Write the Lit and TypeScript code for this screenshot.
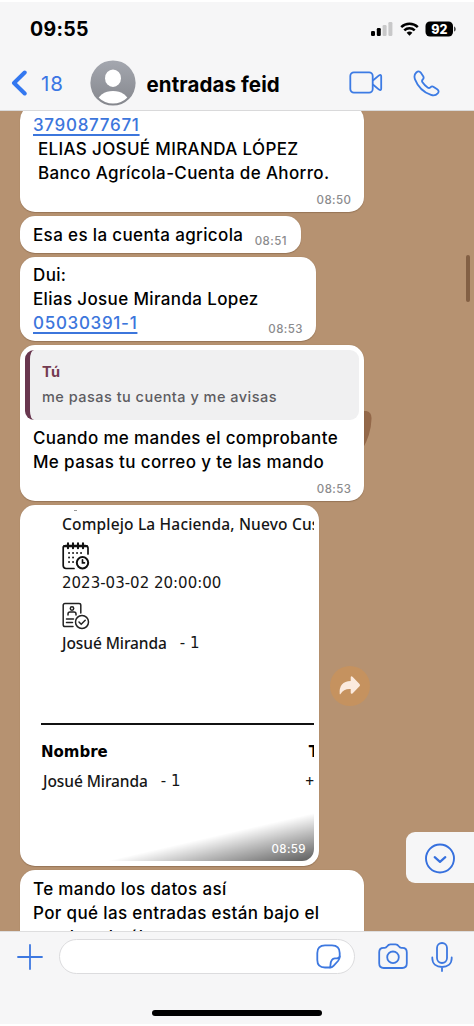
import { LitElement, html, css } from "lit";
import { customElement } from "lit/decorators.js";

@customElement("status-bar")
class StatusBar extends LitElement {
  static styles = css`
    :host { display: flex; height: 56px; align-items: center; padding: 2px 17px 0 30px; box-sizing: border-box; }
    .clock { flex: 1; font-size: 19.5px; font-weight: 700; letter-spacing: 0.3px; }
    .signal { margin-right: 7px; }
    .wifi { margin-right: 6px; }
    .level { font: 800 12.5px Inter, sans-serif; }
  `;
  render() {
    return html`
      <span class="clock">09:55</span>
      <svg class="signal" width="22" height="16" viewBox="0 0 22 16">
        <rect x="0" y="10" width="4" height="5" rx="1.2" />
        <rect x="5.8" y="7" width="4" height="8" rx="1.2" />
        <rect x="11.6" y="4" width="4" height="11" rx="1.2" fill="#c8c8c9" />
        <rect x="17.4" y="1" width="4" height="14" rx="1.2" fill="#c8c8c9" />
      </svg>
      <svg class="wifi" width="19" height="16" viewBox="0 0 19 16" fill="none" stroke="#000" stroke-width="2.5">
        <path d="M1.2 6.1a12 12 0 0 1 16.6 0" />
        <path d="M4.3 9.4a7.4 7.4 0 0 1 10.4 0" />
        <path d="M9.5 14.8 6.6 11.8a4.2 4.2 0 0 1 5.8 0z" fill="#000" stroke="none" />
      </svg>
      <svg width="32" height="16" viewBox="0 0 32 16">
        <rect x="0.5" y="0.5" width="27.5" height="15" rx="4.5" />
        <path d="M29.3 5.4c1.6.5 1.6 4.7 0 5.2z" />
        <text class="level" x="14.3" y="12.5" text-anchor="middle" fill="#fff">92</text>
      </svg>
    `;
  }
}

@customElement("chat-header")
class ChatHeader extends LitElement {
  static styles = css`
    :host { display: flex; height: 55px; align-items: center; padding: 0 34.5px 0 11px; box-sizing: border-box; border-bottom: 1px solid #d9d9da; }
    .count { width: 49px; margin-left: 13px; padding-top: 1px; font-size: 20.5px; color: #3b76e4; letter-spacing: 0.9px; }
    .avatar { margin-right: 10.5px; }
    .name { flex: 1; padding-top: 2px; font-size: 20.5px; font-weight: 700; letter-spacing: 0.1px; white-space: nowrap; }
    .video { margin-right: 30px; }
    svg { flex: none; }
  `;
  render() {
    return html`
      <svg width="17" height="26" viewBox="0 0 17 26" fill="none" stroke="#3478f0" stroke-width="4" stroke-linecap="round" stroke-linejoin="round">
        <path d="M13.7 2.5 3 13l10.7 10.5" />
      </svg>
      <span class="count">18</span>
      <svg class="avatar" width="46" height="46" viewBox="0 0 46 46">
        <defs>
          <linearGradient id="g" x2="0" y2="1"><stop stop-color="#a4a7af" /><stop offset="1" stop-color="#85878d" /></linearGradient>
          <clipPath id="c"><circle cx="23" cy="23" r="20.5" /></clipPath>
        </defs>
        <circle cx="23" cy="23" r="22.6" fill="url(#g)" />
        <ellipse cx="23" cy="18.2" rx="8" ry="8.7" fill="#fff" />
        <ellipse cx="23" cy="42" rx="15.5" ry="11" fill="#fff" clip-path="url(#c)" />
      </svg>
      <span class="name">entradas feid</span>
      <svg class="video" width="34" height="24" viewBox="0 0 34 24" fill="none" stroke="#3c7be4" stroke-width="1.8" stroke-linejoin="round">
        <rect x="1.3" y="1.3" width="22.4" height="20.4" rx="3.6" />
        <path d="M23.9 9.5 30 4.4q2.2-1.4 2.2 1v12.2q0 2.4-2.2 1L23.9 13.5" />
      </svg>
      <svg width="27" height="27" viewBox="0 0 27 27" fill="none" stroke="#3c7be4" stroke-width="1.8" stroke-linejoin="round">
        <path d="M3.3 2.5C5 .9 6.5 1 7.7 2.6l2.5 3.6c.8 1.3.6 2.2-.4 3.3-1 1-1.200 1.400-.5 2.600 1.400 2.200 3.400 4.200 5.600 5.600 1.100.7 1.600.5 2.500-.4 1.100-1.100 2-1.300 3.300-.4l3.500 2.400c1.700 1.200 1.800 2.500.5 4.100-1.700 2-3.900 2.500-6.700 1.500C10.800 22.300 4.700 16.200 2 9.300 1 6.600 1.400 4.300 3.300 2.500Z" />
      </svg>
    `;
  }
}

@customElement("ticket-photo")
class TicketPhoto extends LitElement {
  static styles = css`
    :host { display: block; width: 289px; height: 351px; overflow: hidden; position: relative; border-radius: 12px; color: #161616; font-family: "Noto Sans", sans-serif; font-size: 15.5px; letter-spacing: -0.08px; white-space: nowrap; }
    .info { display: flex; flex-direction: column; padding: 4px 0 0 37px; height: 210px; box-sizing: border-box; }
    .line { line-height: 20px; }
    .place { letter-spacing: 0.17px; }
    .date { font-family: "DejaVu Sans", sans-serif; font-size: 15px; letter-spacing: 0; }
    .num { font-family: "DejaVu Sans", sans-serif; font-size: 15px; letter-spacing: 0; }
    .cal { margin: 8px 0 3px; }
    .badge { margin: 9px 0 3px; }
    .who { display: flex; gap: 13px; }
    .rule { height: 2px; margin-left: 16px; margin-top: 3px; background: #111; }
    .row { display: flex; justify-content: space-between; line-height: 22px; }
    .head { margin: 16px -5px 0 16px; font: 700 15px/22px "DejaVu Sans", sans-serif; letter-spacing: 0; color: #000; }
    .body { margin: 7px 0 0 18px; }
    .shade { position: absolute; inset: 0; background: linear-gradient(167deg, rgba(0,0,0,0) 88.5%, rgba(0,0,0,.26) 93%, rgba(0,0,0,.64) 100%); }
    .time { position: absolute; right: 8px; bottom: 4px; font: 500 11.5px/16px Inter, sans-serif; letter-spacing: .4px; color: #fff; }
    .speck { position: absolute; left: 49px; top: 0; width: 3px; height: 1px; background: #999; }
  `;
  render() {
    return html`
      <div class="info">
        <div class="line place">Complejo La Hacienda, Nuevo Cus</div>
        <svg class="cal" width="28" height="28" viewBox="0 0 28 28" fill="none" stroke="#111" stroke-width="1.7" stroke-linecap="round">
          <path d="M12 26.500H4Q1.200 26.500 1.200 23.500V5.500Q1.200 3.500 4 3.500h19q3 0 3 2.500v6" />
          <path d="M2 4.200h23M6 1.200v5M11 1.200v5M16 1.200v5M21 1.200v5" stroke-width="2.1" />
          <path d="M7 11h.1M11 11h.1M15 11h.1M19 11h.1M7 15.500h.1M11 15.500h.1M7 20h.1M11 20h.1" stroke-width="1.8" />
          <circle cx="20.500" cy="20.800" r="5.700" stroke-width="2" />
          <path d="M20.500 17.800v3h2" />
        </svg>
        <div class="line date">2023-03-02 20:00:00</div>
        <svg class="badge" width="28" height="28" viewBox="0 0 28 28" fill="none" stroke="#222" stroke-width="1.5" stroke-linecap="round">
          <path d="M11 24.500H3q-1.800 0-1.800-1.800V3.200Q1.200 1.500 3 1.500h14q1.800 0 1.800 1.700V11" />
          <circle cx="10" cy="6.500" r="1.700" />
          <path d="M6 13v-1q0-2 2-2h4q2 0 2 2v1M4.500 17h7M4.500 20.500h6" />
          <circle cx="20" cy="20" r="6.500" />
          <path d="m17 20 2.200 2.200 4-4" />
        </svg>
        <div class="line who"><span>Josué Miranda</span><span class="num">- 1</span></div>
      </div>
      <div class="rule"></div>
      <div class="row head"><span>Nombre</span><span>T</span></div>
      <div class="row body"><span class="who"><span>Josué Miranda</span><span class="num">- 1</span></span><span>+</span></div>
      <div class="shade"></div>
      <div class="speck"></div>
      <span class="time">08:59</span>
    `;
  }
}

@customElement("chat-thread")
class ChatThread extends LitElement {
  static styles = css`
    :host { display: block; position: relative; height: 820px; overflow: hidden; background: #b69271; }
    .list { display: flex; flex-direction: column; align-items: flex-start; gap: 4px; padding-left: 20px; margin-top: -6px; }
    .bubble { position: relative; box-sizing: border-box; padding: 0 13px; background: #fff; border-radius: 15px; font-size: 17px; font-weight: 500; line-height: 24px; letter-spacing: 0.36px; white-space: pre; box-shadow: 0 .5px 1px rgba(80,50,25,.3); }
    .link { color: #3c76dc; letter-spacing: 0.7px; text-decoration: underline; text-decoration-thickness: 1.5px; text-underline-offset: 3px; }
    .time { position: absolute; right: 12.500px; bottom: 4px; font-size: 11.5px; line-height: 16px; letter-spacing: .45px; color: #8b8b8d; }
    .account { width: 344px; height: 107px; padding-top: 8px; }
    .short { width: 280.500px; height: 37px; padding-top: 6.500px; }
    .short .time { right: 13.500px; }
    .dui { width: 295.500px; height: 84px; padding-top: 6px; }
    .reply { width: 344px; height: 156px; padding-top: 5px; }
    .photo { width: 299px; height: 361px; padding: 5px; }
    .last { width: 344px; height: 110px; padding-top: 7px; }
    .quote { height: 70px; margin: 0 -8px 6px; box-sizing: border-box; padding: 9px 0 0 12px; border-left: 5px solid #69374f; border-radius: 9px; background: #f0f0f1; font-size: 14.5px; line-height: 25px; color: #5d5c61; letter-spacing: .48px; }
    .author { color: #733a50; font-weight: 700; }
    .doodle { position: absolute; left: 355px; top: 300px; }
    .forward { position: absolute; left: 330px; top: 555px; }
    .scroll { position: absolute; right: 4px; top: 144px; width: 4px; height: 47px; border-radius: 2px; background: #836044; }
    .jump { position: absolute; right: 0; top: 721px; width: 68px; height: 51px; box-sizing: border-box; padding: 11px 0 0 18px; border-radius: 9px 0 0 9px; background: #f6f6f7; }
  `;
  render() {
    return html`
      <svg class="doodle" width="20" height="50" viewBox="0 0 20 50"><path d="M8 0q9-1 8.500 8Q16 24 7 39H0V0z" fill="#936849" /></svg>
      <div class="list">
        <div class="bubble account"><span class="link">3790877671</span>
<span> ELIAS JOSUÉ MIRANDA LÓPEZ
 Banco Agrícola-Cuenta de Ahorro.</span><span class="time">08:50</span></div>
        <div class="bubble short">Esa es la cuenta agricola<span class="time">08:51</span></div>
        <div class="bubble dui">Dui:
Elias Josue Miranda Lopez
<span class="link">05030391-1</span><span class="time">08:53</span></div>
        <div class="bubble reply"><div class="quote"><div class="author">Tú</div><div>me pasas tu cuenta y me avisas</div></div>Cuando me mandes el comprobante
Me pasas tu correo y te las mando<span class="time">08:53</span></div>
        <div class="bubble photo"><ticket-photo></ticket-photo></div>
        <div class="bubble last">Te mando los datos así
Por qué las entradas están bajo el<div>nombre de él</div></div>
      </div>
      <svg class="forward" width="40" height="40" viewBox="0 0 40 40">
        <circle cx="20" cy="20" r="20" fill="#c5925f" />
        <path d="M9.700 28q-1-12.500 11-13v-3.500q.2-2 1.800-.7l7 7.200q1.200 1.200 0 2.300l-7 7.200q-1.600 1-1.800-.8V23q-7-.5-10 4.800-.6.900-1 .2z" fill="#fbeade" />
      </svg>
      <div class="scroll"></div>
      <div class="jump">
        <svg width="32" height="32" viewBox="0 0 32 32" fill="none" stroke="#3670de" stroke-width="1.900" stroke-linecap="round" stroke-linejoin="round">
          <circle cx="16" cy="15.500" r="14" /><path d="m10.700 14.200 5.300 4.600 5.300-4.600" stroke-width="2.200" />
        </svg>
      </div>
    `;
  }
}

@customElement("message-composer")
class MessageComposer extends LitElement {
  static styles = css`
    :host { display: flex; flex-direction: column; height: 95px; box-sizing: border-box; border-top: 1px solid #dededf; border-bottom: 2px solid #fff; }
    .bar { display: flex; align-items: center; padding: 7px 20px 0 17px; }
    .field { display: flex; align-items: center; justify-content: flex-end; width: 296px; height: 35px; box-sizing: border-box; margin: 0 23px 0 16px; padding-right: 13px; border: 1px solid #dcdcde; border-radius: 18px; background: #fff; }
    .camera { margin-right: 23px; }
    .home { width: 170px; height: 6px; margin: 36px auto 0 152px; border-radius: 3px; background: #000; }
    svg { fill: none; stroke: #3d78e0; stroke-width: 1.8; stroke-linecap: round; stroke-linejoin: round; flex: none; }
  `;
  render() {
    return html`
      <div class="bar">
        <svg width="26" height="26" viewBox="0 0 26 26"><path d="M13 1v24M1 13h24" /></svg>
        <div class="field">
          <svg width="25" height="25" viewBox="0 0 25 25">
            <path d="M14 23.500H9Q1.300 23.500 1.300 16V9Q1.300 1.300 9 1.300h7Q23.700 1.300 23.700 9v3.500Q23.700 15 22 17l-4.500 4.800Q16 23.500 14 23.500Z" />
            <path d="M14 23.400c1.200-2.400-.7-8.400 4.800-9 2.700-.3 4.500.5 4.900-1.900" />
          </svg>
        </div>
        <svg class="camera" width="30" height="27" viewBox="0 0 30 27">
          <path d="M5.500 4.800h1.200c1.300 0 1.800-.5 2.500-1.500C10.100 1.800 10.700 1.300 12.500 1.300h5c1.800 0 2.400.5 3.300 2 .7 1 1.200 1.500 2.500 1.500h1.200q4.300 0 4.300 4.500v11q0 4.700-4.500 4.700H5.700q-4.500 0-4.500-4.700v-11q0-4.500 4.300-4.500Z" />
          <circle cx="15" cy="14.300" r="5.800" />
        </svg>
        <svg width="22" height="30" viewBox="0 0 22 30">
          <rect x="6" y="1" width="10" height="20" rx="5" />
          <path d="M1.300 15.500v.8C1.300 22 5.600 25 11 25s9.700-3 9.700-8.700v-.8M11 25v4" />
        </svg>
      </div>
      <div class="home"></div>
    `;
  }
}

@customElement("app-root")
class AppRoot extends LitElement {
  static styles = css`
    :host { display: flex; flex-direction: column; width: 474px; height: 1026px; overflow: hidden; box-sizing: border-box; background: linear-gradient(#fff 2px, #f6f6f7 2px); font-family: Inter, sans-serif; color: #000; }
  `;
  render() {
    return html`
      <status-bar></status-bar>
      <chat-header></chat-header>
      <chat-thread></chat-thread>
      <message-composer></message-composer>
    `;
  }
}
